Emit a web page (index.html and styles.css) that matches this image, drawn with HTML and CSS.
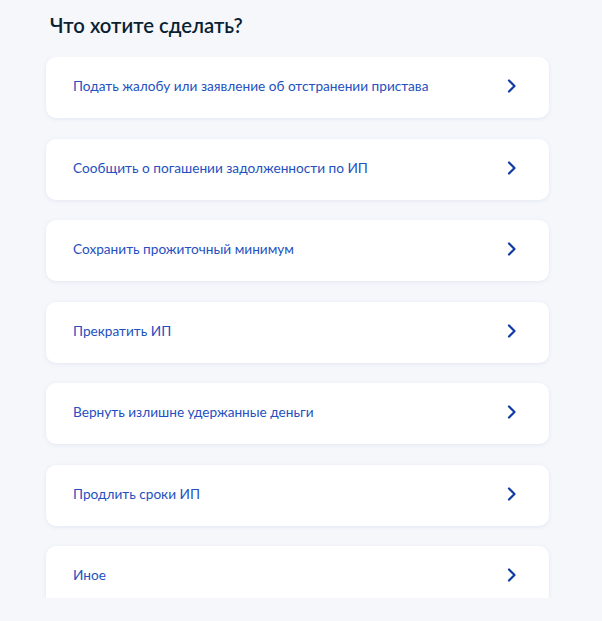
FILE: index.html
```html
<!DOCTYPE html>
<html lang="ru">
<head>
<meta charset="utf-8">
<link rel="stylesheet" href="styles.css">
</head>
<body>
<main class="page">
  <h1 class="title">Что хотите сделать?</h1>
  <div class="list">
    <a class="card"><span class="label">Подать жалобу или заявление об отстранении пристава</span><svg class="chev" viewBox="0 0 10 14"><path d="M2 1.5 L7.5 7 L2 12.5"/></svg></a>
    <a class="card"><span class="label">Сообщить о погашении задолженности по ИП</span><svg class="chev" viewBox="0 0 10 14"><path d="M2 1.5 L7.5 7 L2 12.5"/></svg></a>
    <a class="card"><span class="label">Сохранить прожиточный минимум</span><svg class="chev" viewBox="0 0 10 14"><path d="M2 1.5 L7.5 7 L2 12.5"/></svg></a>
    <a class="card"><span class="label">Прекратить ИП</span><svg class="chev" viewBox="0 0 10 14"><path d="M2 1.5 L7.5 7 L2 12.5"/></svg></a>
    <a class="card"><span class="label">Вернуть излишне удержанные деньги</span><svg class="chev" viewBox="0 0 10 14"><path d="M2 1.5 L7.5 7 L2 12.5"/></svg></a>
    <a class="card"><span class="label">Продлить сроки ИП</span><svg class="chev" viewBox="0 0 10 14"><path d="M2 1.5 L7.5 7 L2 12.5"/></svg></a>
    <a class="card"><span class="label">Иное</span><svg class="chev" viewBox="0 0 10 14"><path d="M2 1.5 L7.5 7 L2 12.5"/></svg></a>
  </div>
</main>
</body>
</html>
```

FILE: styles.css
```css
html, body {
  margin: 0;
  padding: 0;
  background: #f5f7fb;
}
.page {
  width: 503px;
  padding: 11px 0 0 46px;
  font-family: Lato, "Noto Sans", sans-serif;
}
.title {
  margin: 0 0 0 4px;
  font-size: 20.3px;
  line-height: 28px;
  font-weight: 600;
  color: #0b1f33;
  height: 46px;
}
.list {
  display: flex;
  flex-direction: column;
  gap: 20.5px;
  height: 541px;
  overflow: hidden;
  padding: 0 4px;
  margin: 0 -4px;
}
.card {
  flex: 0 0 61px;
  display: flex;
  align-items: center;
  justify-content: space-between;
  background: #ffffff;
  border-radius: 10px;
  box-shadow: 0 1px 4px rgba(100, 120, 170, 0.12);
  padding: 0 32px 3px 27px;
  box-sizing: border-box;
}
.label {
  font-size: 13.65px;
  color: #2450c0;
}
.chev {
  width: 10px;
  height: 14px;
  fill: none;
  stroke: #0f3aa6;
  stroke-width: 2.2;
  stroke-linecap: round;
  stroke-linejoin: round;
}
```
